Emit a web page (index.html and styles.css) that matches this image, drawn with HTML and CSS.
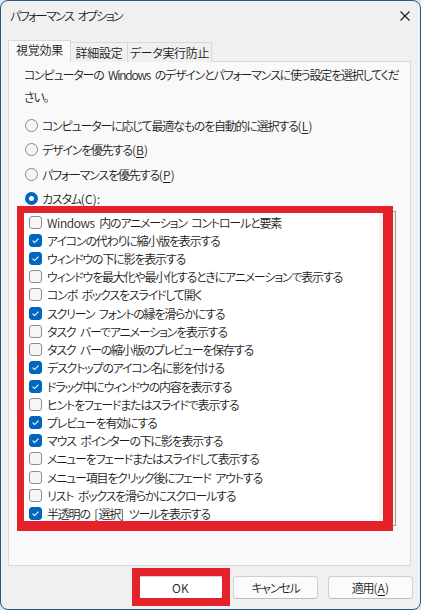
FILE: index.html
```html
<!DOCTYPE html>
<html lang="ja">
<head>
<meta charset="utf-8">
<title>パフォーマンス オプション</title>
<link rel="stylesheet" href="styles.css">
</head>
<body>
<div class="window">
  <div class="titlebar">
    <span class="title">パフォーマンス オプション</span>
    <span class="close"><svg width="10" height="10" viewBox="0 0 10 10"><path d="M0.5 0.5L9.5 9.5M9.5 0.5L0.5 9.5" stroke="#1b1b1b" stroke-width="1.1" fill="none"/></svg></span>
  </div>
  <div class="tabs">
    <div class="tab active t1">視覚効果</div>
    <div class="tab t2">詳細設定</div>
    <div class="tab t3">データ実行防止</div>
  </div>
  <div class="panel">
    <p class="intro">コンピューターの Windows のデザインとパフォーマンスに使う設定を選択してください。</p>
    <div class="radios">
      <div class="radio"><span class="rb"></span>コンピューターに応じて最適なものを自動的に選択する<span class="key">(<u>L</u>)</span></div>
      <div class="radio"><span class="rb"></span>デザインを優先する<span class="key">(<u>B</u>)</span></div>
      <div class="radio"><span class="rb"></span>パフォーマンスを優先する<span class="key">(<u>P</u>)</span></div>
      <div class="radio"><span class="rb on"></span>カスタム<span class="key">(<u>C</u>):</span></div>
    </div>
    <div class="listbox">
      <ul class="items">
        <li><span class="cb"></span><span class="latin">Windows</span> 内のアニメーション コントロールと要素</li>
        <li><span class="cb on"><svg width="13" height="13" viewBox="0 0 13 13"><path d="M3.6 6.7L5.6 8.6L9.5 4.6" stroke="#fff" stroke-width="1.1" fill="none"/></svg></span>アイコンの代わりに縮小版を表示する</li>
        <li><span class="cb on"><svg width="13" height="13" viewBox="0 0 13 13"><path d="M3.6 6.7L5.6 8.6L9.5 4.6" stroke="#fff" stroke-width="1.1" fill="none"/></svg></span>ウィンドウの下に影を表示する</li>
        <li><span class="cb"></span>ウィンドウを最大化や最小化するときにアニメーションで表示する</li>
        <li><span class="cb"></span>コンボ ボックスをスライドして開く</li>
        <li><span class="cb on"><svg width="13" height="13" viewBox="0 0 13 13"><path d="M3.6 6.7L5.6 8.6L9.5 4.6" stroke="#fff" stroke-width="1.1" fill="none"/></svg></span>スクリーン フォントの縁を滑らかにする</li>
        <li><span class="cb"></span>タスク バーでアニメーションを表示する</li>
        <li><span class="cb"></span>タスク バーの縮小版のプレビューを保存する</li>
        <li><span class="cb on"><svg width="13" height="13" viewBox="0 0 13 13"><path d="M3.6 6.7L5.6 8.6L9.5 4.6" stroke="#fff" stroke-width="1.1" fill="none"/></svg></span>デスクトップのアイコン名に影を付ける</li>
        <li><span class="cb on"><svg width="13" height="13" viewBox="0 0 13 13"><path d="M3.6 6.7L5.6 8.6L9.5 4.6" stroke="#fff" stroke-width="1.1" fill="none"/></svg></span>ドラッグ中にウィンドウの内容を表示する</li>
        <li><span class="cb"></span>ヒントをフェードまたはスライドで表示する</li>
        <li><span class="cb on"><svg width="13" height="13" viewBox="0 0 13 13"><path d="M3.6 6.7L5.6 8.6L9.5 4.6" stroke="#fff" stroke-width="1.1" fill="none"/></svg></span>プレビューを有効にする</li>
        <li><span class="cb on"><svg width="13" height="13" viewBox="0 0 13 13"><path d="M3.6 6.7L5.6 8.6L9.5 4.6" stroke="#fff" stroke-width="1.1" fill="none"/></svg></span>マウス ポインターの下に影を表示する</li>
        <li><span class="cb"></span>メニューをフェードまたはスライドして表示する</li>
        <li><span class="cb"></span>メニュー項目をクリック後にフェード アウトする</li>
        <li><span class="cb"></span>リスト ボックスを滑らかにスクロールする</li>
        <li><span class="cb on"><svg width="13" height="13" viewBox="0 0 13 13"><path d="M3.6 6.7L5.6 8.6L9.5 4.6" stroke="#fff" stroke-width="1.1" fill="none"/></svg></span>半透明の <span class="key">[</span>選択<span class="key">]</span> ツールを表示する</li>
      </ul>
      <div class="mark mark-list"></div>
    </div>
  </div>
  <div class="buttons">
    <div class="btn default"><span class="key">OK</span><div class="mark mark-ok"></div></div>
    <div class="btn">キャンセル</div>
    <div class="btn">適用<span class="key">(<u>A</u>)</span></div>
  </div>
</div>
</body>
</html>
```

FILE: styles.css
```css
* { box-sizing: border-box; }
html, body { margin: 0; padding: 0; }
body {
  background: #dfe5ec;
  font-family: "Noto Sans CJK JP", "Noto Sans", sans-serif;
  font-feature-settings: "palt";
  font-size: 12px;
  font-weight: 350;
  letter-spacing: -1.2px;
  word-spacing: 3px;
  color: #1b1b1b;
}
.latin { letter-spacing: -0.4px; }
.key { letter-spacing: 0.2px; }
.window {
  width: 421px;
  height: 610px;
  border: 1px solid #2b5882;
  border-radius: 8px;
  background: #f0f0f0;
  display: flex;
  flex-direction: column;
  overflow: hidden;
}
.titlebar {
  height: 30px;
  display: flex;
  align-items: center;
  justify-content: space-between;
  padding: 0 10px 0 9px;
}
.title { font-size: 12px; line-height: 1; letter-spacing: -1.6px; word-spacing: 3px; }
.close { display: flex; width: 10px; height: 10px; }
.tabs {
  margin-top: 9px;
  height: 22px;
  padding-left: 7px;
  display: flex;
  align-items: flex-end;
  position: relative;
  z-index: 2;
}
.tab {
  height: 20px;
  border: 1px solid #d9d9d9;
  border-bottom: none;
  background: #f0f0f0;
  display: flex;
  align-items: center;
  justify-content: center;
  margin-left: -1px;
  line-height: 1;
  letter-spacing: -0.3px;
}
.tab.active {
  height: 22px;
  background: #f9f9f9;
  margin-left: 0;
  padding-bottom: 4px;
}
.t1 { width: 63px; }
.t2 { width: 58px; }
.t3 { width: 85px; }
.panel {
  position: relative;
  z-index: 1;
  margin: -1px 9px 0 7px;
  height: 505px;
  border: 1px solid #d9d9d9;
  background: #f9f9f9;
  padding: 2px 14px 0 10px;
}
.intro {
  margin: 0 -8px 5px 0;
  padding-left: 5px;
  line-height: 22px;
}
.radios { display: flex; flex-direction: column; }
.radio {
  height: 24.5px;
  display: flex;
  align-items: center;
  padding-left: 6px;
}
.rb {
  width: 13px;
  height: 13px;
  border-radius: 50%;
  border: 1px solid #8a8a8a;
  background: #f5f5f5;
  margin-right: 4px;
  flex: none;
}
.rb.on {
  border: 4px solid #0067c0;
  background: #fff;
}
u { text-decoration-thickness: 1px; text-underline-offset: 2px; }
.listbox {
  position: relative;
  height: 315px;
  border: 1px solid #9a9a9a;
  background: #f4f4f4;
}
.items {
  list-style: none;
  margin: 1px 0 0;
  padding: 0;
  width: 359px;
  background: #fff;
}
.items li {
  height: 18.23px;
  display: flex;
  align-items: center;
  padding-left: 9px;
  white-space: pre;
}
.cb {
  width: 13px;
  height: 13px;
  border-radius: 3px;
  border: 1px solid #8d8d8d;
  background: #f6f6f6;
  margin-right: 5px;
  flex: none;
  display: flex;
}
.cb.on {
  border-color: #0067c0;
  background: #0067c0;
}
.cb.on svg { margin: -1px; }
.mark {
  position: absolute;
  border: 0 solid #e5212b;
}
.mark-list {
  left: -3px;
  top: -6px;
  width: 376px;
  height: 325px;
  border-width: 7px 10px 10px 7px;
}
.buttons {
  margin-top: 10px;
  padding-right: 7px;
  display: flex;
  justify-content: flex-end;
  gap: 10px;
}
.btn {
  position: relative;
  width: 85px;
  height: 23px;
  border: 1px solid #d0d0d0;
  border-bottom-color: #bdbdbd;
  border-radius: 4px;
  background: #fbfbfb;
  display: flex;
  align-items: center;
  justify-content: center;
  line-height: 1;
}
.btn.default { background: #fff; }
.mark-ok {
  left: -7px;
  top: -9px;
  width: 98px;
  height: 38px;
  border-width: 8px;
}
```
